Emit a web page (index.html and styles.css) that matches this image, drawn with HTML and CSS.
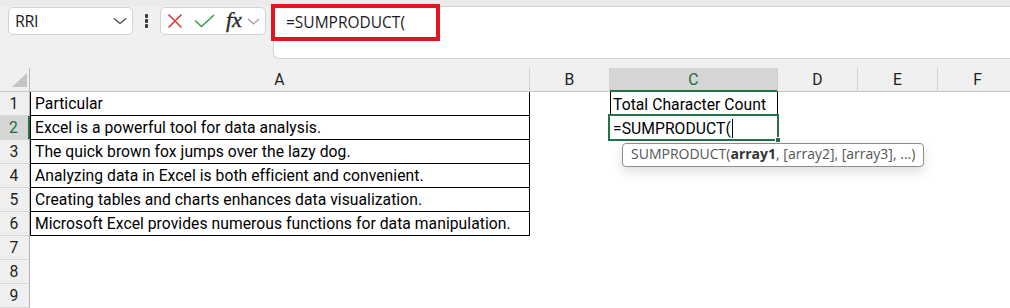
FILE: index.html
```html
<!DOCTYPE html>
<html>
<head>
<meta charset="utf-8">
<link rel="stylesheet" href="styles.css">
</head>
<body>
<div class="topbar">
  <div class="namebox">
    <span class="nb-text">RRI</span>
    <svg class="nb-chev" width="14" height="8" viewBox="0 0 14 8"><polyline points="1,1.5 7,6.5 13,1.5" fill="none" stroke="#444" stroke-width="1.3"/></svg>
  </div>
  <div class="dots"><i></i><i></i><i></i></div>
  <div class="fxbox">
    <svg class="ico-x" width="16" height="16" viewBox="0 0 16 16"><path d="M1.5 1.5 L14.5 14.5 M14.5 1.5 L1.5 14.5" stroke="#e5373c" stroke-width="1.6" fill="none"/></svg>
    <svg class="ico-ok" width="21" height="14" viewBox="0 0 21 14"><polyline points="1,6.5 7.5,12.5 20,1" fill="none" stroke="#3a9c48" stroke-width="1.6"/></svg>
    <span class="fx">fx</span>
    <svg class="ico-chev" width="13" height="7" viewBox="0 0 13 7"><polyline points="1,1 6.5,6 12,1" fill="none" stroke="#9b9b9b" stroke-width="1.2"/></svg>
  </div>
  <div class="formula">
    <span class="ftext">=SUMPRODUCT(</span>
    <div class="redbox"></div>
  </div>
</div>

<div class="sheet">
  <div class="corner"><svg width="30" height="24" viewBox="0 0 30 24"><polygon points="27,5 27,19 12,19" fill="#c4c4c4"/></svg></div>
  <div class="ch">A</div><div class="ch">B</div><div class="ch sel">C</div><div class="ch">D</div><div class="ch">E</div><div class="ch">F</div>

  <div class="rh">1</div><div class="c t">Particular</div><div class="c"></div><div class="c cc tc">Total Character Count</div><div class="c"></div><div class="c"></div><div class="c"></div>
  <div class="rh sel">2</div><div class="c t">Excel is a powerful tool for data analysis.</div><div class="c"></div><div class="c cc active">=SUMPRODUCT(<span class="caret"></span><span class="selbox"><span class="handle"></span></span></div><div class="c"></div><div class="c"></div><div class="c"></div>
  <div class="rh">3</div><div class="c t">The quick brown fox jumps over the lazy dog.</div><div class="c"></div><div class="c"></div><div class="c"></div><div class="c"></div><div class="c"></div>
  <div class="rh">4</div><div class="c t">Analyzing data in Excel is both efficient and convenient.</div><div class="c"></div><div class="c"></div><div class="c"></div><div class="c"></div><div class="c"></div>
  <div class="rh">5</div><div class="c t">Creating tables and charts enhances data visualization.</div><div class="c"></div><div class="c"></div><div class="c"></div><div class="c"></div><div class="c"></div>
  <div class="rh">6</div><div class="c t">Microsoft Excel provides numerous functions for data manipulation.</div><div class="c"></div><div class="c"></div><div class="c"></div><div class="c"></div><div class="c"></div>
  <div class="rh">7</div><div class="c"></div><div class="c"></div><div class="c"></div><div class="c"></div><div class="c"></div><div class="c"></div>
  <div class="rh">8</div><div class="c"></div><div class="c"></div><div class="c"></div><div class="c"></div><div class="c"></div><div class="c"></div>
  <div class="rh">9</div><div class="c"></div><div class="c"></div><div class="c"></div><div class="c"></div><div class="c"></div><div class="c"></div>

  <div class="tooltip">SUMPRODUCT(<b>array1</b>, [array2], [array3], ...)</div>
</div>
</body>
</html>
```
FILE: styles.css
```css
* { box-sizing: border-box; }
html, body { margin: 0; padding: 0; }
body {
  width: 1010px;
  height: 308px;
  overflow: hidden;
  background: #f0f0f0;
  font-family: Roboto, "Liberation Sans", sans-serif;
}

/* ---------- formula bar ---------- */
.topbar {
  height: 68px;
  display: flex;
  align-items: flex-start;
  padding-top: 7px;
  background: linear-gradient(#ebebeb 0, #ebebeb 6px, #f0f0f0 6px);
}
.namebox {
  margin-left: 8px;
  width: 125px;
  height: 28px;
  background: #fff;
  border: 1px solid #d2d2d2;
  border-radius: 5px;
  display: flex;
  align-items: center;
  padding-left: 6px;
  padding-right: 5px;
}
.nb-text {
  font-family: "Open Sans", sans-serif;
  font-size: 16px;
  letter-spacing: -0.4px;
  color: #1b1b1b;
}
.nb-chev { margin-left: auto; }
.dots {
  width: 27px;
  height: 28px;
  display: flex;
  flex-direction: column;
  align-items: center;
  justify-content: center;
  gap: 1.5px;
}
.dots i {
  display: block;
  width: 3.5px;
  height: 3.5px;
  background: #3a3a3a;
  border-radius: 1px;
}
.fxbox {
  width: 106px;
  height: 28px;
  background: #fff;
  border: 1px solid #d2d2d2;
  border-radius: 5px;
  display: flex;
  align-items: center;
  padding-left: 6px;
}
.ico-x { margin-top: -1px; }
.ico-ok { margin-left: 11px; }
.fx {
  margin-left: 11px;
  font-family: "Liberation Serif", serif;
  font-style: italic;
  font-size: 22px;
  line-height: 22px;
  color: #2b2b2b;
  margin-top: -2px;
  -webkit-text-stroke: 0.4px #2b2b2b;
}
.ico-chev { margin-left: 5px; }
.formula {
  position: relative;
  margin-left: 7px;
  margin-top: -1px;
  flex: 1;
  height: 53px;
  background: #fff;
  border: 1px solid #d2d2d2;
  border-right: none;
  border-radius: 6px 0 0 6px;
  padding-left: 12px;
}
.ftext {
  display: block;
  font-family: "Open Sans", sans-serif;
  font-size: 15.5px;
  line-height: 30px;
  color: #1c1c1c;
}
.redbox {
  position: absolute;
  left: -3px;
  top: -3px;
  width: 169px;
  height: 37px;
  border: 4.5px solid #e3151f;
}

/* ---------- sheet ---------- */
.sheet {
  position: relative;
  display: grid;
  grid-template-columns: 30px 500px 80px 168px 80px 80px 80px;
  grid-auto-rows: 24px;
  background: #fff;
  font-size: 15.7px;
  letter-spacing: 0.04px;
  color: #000;
}
.corner {
  background: #f0f0f0;
  border-right: 1px solid #bdbdbd;
  border-bottom: 1px solid #c6c6c6;
}
.corner svg { display: block; }
.ch {
  background: #f0f0f0;
  border-right: 1px solid #d0d0d0;
  border-bottom: 1px solid #c6c6c6;
  display: flex;
  align-items: center;
  justify-content: center;
  color: #1e1e1e;
}
.ch.sel {
  background: #d5d5d5;
  color: #1d6b3e;
  border-bottom: 2px solid #217346;
}
.rh {
  background: #f0f0f0;
  border-right: 1px solid #b5b5b5;
  border-bottom: 1px solid #d6d6d6;
  display: flex;
  align-items: center;
  justify-content: center;
  color: #1e1e1e;
  padding-right: 1px;
}
.rh.sel {
  background: #d5d5d5;
  color: #1d6b3e;
  border-right: 2px solid #217346;
}
.c {
  display: flex;
  align-items: center;
  padding-left: 4px;
  white-space: nowrap;
}
.c.t {
  border-left: 1px solid #000;
  border-right: 1px solid #000;
  border-bottom: 1px solid #000;
}
.c.cc { padding-left: 2px; }
.c.tc {
  border-left: 1px solid #000;
  border-right: 1px solid #000;
}
.c.active {
  position: relative;
  padding-left: 3px;
}
.caret {
  display: inline-block;
  width: 1px;
  height: 19px;
  background: #000;
  margin-left: 1px;
}
.selbox {
  position: absolute;
  left: -2px;
  top: -2px;
  right: -1px;
  bottom: -1px;
  border: 2px solid #217346;
}
.handle {
  position: absolute;
  right: -4px;
  bottom: -4px;
  width: 6px;
  height: 6px;
  background: #217346;
  border: 1px solid #fff;
}
.tooltip {
  position: absolute;
  left: 622px;
  top: 75px;
  height: 24px;
  padding: 0 8px;
  background: #fff;
  border: 1px solid #8d8d8d;
  border-radius: 4px;
  box-shadow: 0 5px 12px rgba(0, 0, 0, 0.13);
  font-family: "Open Sans", sans-serif;
  font-size: 14px;
  line-height: 20px;
  letter-spacing: 0;
  color: #555;
  white-space: nowrap;
}
.tooltip b { color: #333; font-weight: 700; }
```
